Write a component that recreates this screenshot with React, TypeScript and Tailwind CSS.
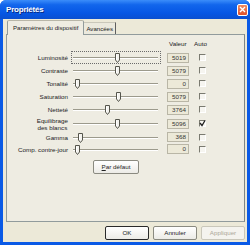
import React from "react";

const font = { fontFamily: '"Liberation Sans", Arial, sans-serif' };

function Slider({ pos, focus }: { pos: number; focus?: boolean }) {
  return (
    <div
      className={`relative h-full w-[90px] ml-[2px] ${
        focus ? "border border-dotted border-[#6b6b6b]" : "border border-transparent"
      }`}
    >
      <div className="absolute left-[1px] right-[2px] top-[5px] h-[2px] border-t border-t-[#9c9a8c] border-b border-b-white" />
      <svg
        className="absolute top-[1px]"
        style={{ left: pos - 3 }}
        width="5"
        height="10"
        viewBox="0 0 5 10"
      >
        <polygon points="0.5,0.5 4.5,0.5 4.5,7 2.5,9.5 0.5,7" fill="#f4f3ee" stroke="#55554c" strokeWidth="1" />
        <line x1="1.5" y1="1.5" x2="1.5" y2="7" stroke="#ffffff" strokeWidth="1" />
      </svg>
    </div>
  );
}

function Check({ checked }: { checked?: boolean }) {
  return (
    <div className="ml-[10px] w-[7px] h-[7px] border-t border-l border-t-[#7a7a70] border-l-[#7a7a70] border-r border-b border-r-white border-b-white bg-[#f6f5f0] relative">
      {checked && (
        <svg className="absolute -left-px -top-px" width="7" height="7" viewBox="0 0 7 7">
          <polyline points="1,3 3,5.5 6,0.5" fill="none" stroke="#222" strokeWidth="1.3" />
        </svg>
      )}
    </div>
  );
}

function Row({
  label,
  pos,
  value,
  checked,
  focus,
  h,
  two,
}: {
  label: string;
  pos: number;
  value: string;
  checked?: boolean;
  focus?: boolean;
  h: string;
  two?: string;
}) {
  return (
    <div className={`flex items-center ${h}`}>
      <div className="w-[62px] pr-[1px] text-right text-[6.25px] leading-[7px] text-[#222]">
        {two ? (
          <span className="inline-block text-center">
            {label}
            <br />
            {two}
          </span>
        ) : (
          label
        )}
      </div>
      <div className="h-[13px] flex items-center">
        <Slider pos={pos} focus={focus} />
      </div>
      <div className="ml-[6px] w-[22px] h-[10px] border border-[#b9b6a6] bg-[#ece9d8] text-right pr-[2px] text-[6.25px] leading-[8px] text-[#333]">
        {value}
      </div>
      <Check checked={checked} />
    </div>
  );
}

function Btn({ children, def, disabled, w }: { children: React.ReactNode; def?: boolean; disabled?: boolean; w: string }) {
  return (
    <div
      className={`${w} h-[14px] flex items-center justify-center rounded-[2px] text-[6.25px] ${
        disabled
          ? "border border-[#c9c7ba] text-[#aca899] bg-[#f4f3ee]"
          : def
          ? "border border-[#2a2a2a] text-[#222] bg-[linear-gradient(to_bottom,#ffffff,#ecebe6)]"
          : "border border-[#8a8a80] text-[#222] bg-[linear-gradient(to_bottom,#ffffff,#ecebe6)]"
      }`}
    >
      {children}
    </div>
  );
}

export default function App() {
  return (
    <div style={font} className="w-[250px] h-[245px] bg-[#0a5ae6] rounded-t-[6px] flex flex-col overflow-hidden">
      <div className="h-[19px] flex items-center justify-between pl-[6px] pr-[2px] bg-[linear-gradient(to_bottom,#3b8dfa,#1266ec_25%,#0656e4_70%,#0a4fd0)]">
        <span className="text-white font-bold text-[8px] tracking-[-0.2px] [text-shadow:1px_1px_0_#0a2a80]">
          Propriétés
        </span>
        <div className="w-[11px] h-[12px] rounded-[2px] border border-white bg-[linear-gradient(to_bottom,#f08a60,#e0502a)] flex items-center justify-center">
          <svg width="7" height="7" viewBox="0 0 7 7">
            <path d="M1 1 L6 6 M6 1 L1 6" stroke="white" strokeWidth="1.4" />
          </svg>
        </div>
      </div>
      <div className="mx-[3px] mb-[3px] flex-1 bg-[#ece9d8] flex flex-col pl-[3px] pr-[2px] pt-[1px] pb-[2px]">
        <div className="flex h-[14px] ml-[1px] items-end relative z-10">
          <div className="h-[15px] -mb-px px-[5px] flex items-center border border-[#919b9c] border-b-0 border-t-[#b8b6a8] rounded-t-[2px] bg-[#eeece2] text-[6.1px] text-[#222]">
            Paramètres du dispositif
          </div>
          <div className="h-[12px] px-[2px] flex items-center border-r border-r-[#5e5e5e] border-t border-t-[#c9c7ba] text-[6.1px] text-[#222] bg-[#ebe9dd]">
            Avancées
          </div>
        </div>
        <div className="h-[188px] border border-[#919b9c] border-r-[#7d8586] bg-[#eeece2] flex flex-col pt-[2px]">
          <div className="flex h-[13px] items-center text-[6.25px] text-[#222]">
            <div className="w-[161px]" />
            <div className="w-[22px] pl-[1px]">Valeur</div>
            <div className="ml-[4px]">Auto</div>
          </div>
          <div className="mt-[1px] flex flex-col">
            <Row label="Luminosité" pos={46} value="5019" focus h="h-[13px]" />
            <Row label="Contraste" pos={46} value="5079" h="h-[13px]" />
            <Row label="Tonalité" pos={6} value="0" h="h-[13px]" />
            <Row label="Saturation" pos={47} value="5079" h="h-[13px]" />
            <Row label="Netteté" pos={36} value="3764" h="h-[13px]" />
            <Row label="Equilibrage" two="des blancs" pos={46} value="5096" checked h="h-[15px]" />
            <Row label="Gamma" pos={9} value="368" h="h-[12px]" />
            <Row label="Comp. contre-jour" pos={6} value="0" h="h-[12px]" />
          </div>
          <div className="mt-[5px] ml-[86px]">
            <Btn w="w-[46px]">
              <span>
                <span className="underline">P</span>ar défaut
              </span>
            </Btn>
          </div>
        </div>
        <div className="mt-[4px] flex justify-end gap-[4px]">
          <Btn w="w-[44px]" def>
            OK
          </Btn>
          <Btn w="w-[44px]">Annuler</Btn>
          <Btn w="w-[44px]" disabled>
            Appliquer
          </Btn>
        </div>
      </div>
    </div>
  );
}
